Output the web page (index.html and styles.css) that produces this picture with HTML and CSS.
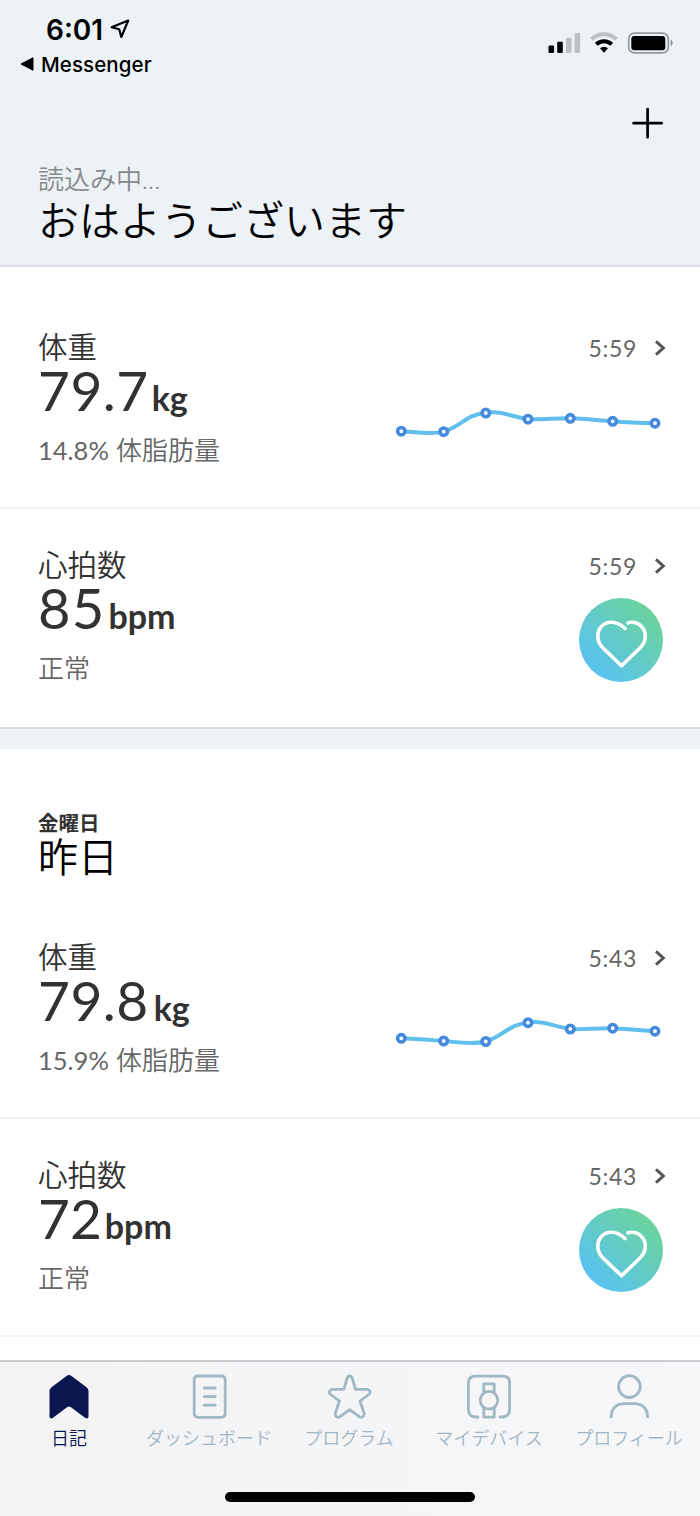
FILE: index.html
```html
<!DOCTYPE html>
<html lang="ja">
<head>
<meta charset="utf-8">
<title>日記</title>
<link rel="stylesheet" href="styles.css">
</head>
<body>
<div class="app">
  <header class="header">
    <div class="status">
      <div class="status-left">
        <div class="clock"><span class="clock-time">6:01</span>
          <svg class="location" width="20" height="20" viewBox="0 0 20 20"><path d="M18.2 1.6 L1.6 8.2 L9.2 10.3 L11.3 18 Z" fill="none" stroke="#000" stroke-width="2.2" stroke-linejoin="round"/></svg>
        </div>
        <div class="back">
          <svg width="14" height="14" viewBox="0 0 14 14"><path d="M1 7 L13 .8 V13.2 Z" stroke="#000" stroke-linejoin="round"/></svg>
          <span>Messenger</span>
        </div>
      </div>
      <svg class="status-icons" width="126" height="24" viewBox="548 31 126 24">
        <rect x="548.5" y="45.5" width="5.6" height="7.5" rx="1.3"/>
        <rect x="557.2" y="41.7" width="5.6" height="11.3" rx="1.3"/>
        <g fill="#bcc0c4"><rect x="566" y="37.8" width="5.6" height="15.2" rx="1.3"/><rect x="574.6" y="33" width="5.6" height="20" rx="1.3"/></g>
        <path d="M591.5 39.4 A17.5 17.5 0 0 1 616.5 39.4" fill="none" stroke="#bcc0c4" stroke-width="4"/>
        <path d="M596.3 44.4 A11 11 0 0 1 611.7 44.4" fill="none" stroke="#000" stroke-width="4"/>
        <path d="M600 48.3 A5.7 5.7 0 0 1 608 48.3 L604 52.8 Z"/>
        <rect x="628.7" y="33.2" width="39.6" height="19.6" rx="5.6" fill="none" stroke="#96999c" stroke-width="1.7"/>
        <rect x="631.3" y="36" width="34" height="14.3" rx="3"/>
        <path d="M670.7 39.6 Q672.7 40.8 672.7 43 Q672.7 45.2 670.7 46.4Z" fill="#8e9194"/>
      </svg>
    </div>
    <div class="toolbar">
      <svg width="32" height="32" viewBox="0 0 32 32"><path d="M15.6 2.2 V30.2 M1.6 16.2 H29.6" stroke="#000" stroke-width="2.7" stroke-linecap="round"/></svg>
    </div>
    <div class="loading">読込み中...</div>
    <h1 class="greeting">おはようございます</h1>
  </header>

  <main class="feed">
    <section class="day day-today">
      <article class="metric">
        <div class="metric-text">
          <h3 class="metric-name">体重</h3>
          <div class="metric-value">79.7<span class="unit">kg</span></div>
          <div class="metric-note"><span class="percent">14.8%</span> 体脂肪量</div>
        </div>
        <div class="metric-side">
          <div class="metric-time">5:59 <svg width="12" height="18" viewBox="0 0 12 18"><path d="M2 2.3 L9.3 9 L2 15.7" fill="none" stroke="#555" stroke-width="3"/></svg></div>
          <svg class="trend" width="274" height="80" viewBox="0 0 274 80">
            <path class="trend-line" d="M11.3 51.2 C25 52 42 55 53.7 51.7 C70 47 77 34 95.8 33 C112 30 121 37 138 39.2 C151 40 166 38 180.3 38.3 C194 38.5 209 40.5 222.7 41.3 C237 42.5 251 43 265 43.2"/>
            <g class="trend-dots"><circle cx="11.3" cy="51.2" r="3.7"/><circle cx="53.7" cy="51.7" r="3.7"/><circle cx="95.8" cy="33" r="3.7"/><circle cx="138" cy="39.2" r="3.7"/><circle cx="180.3" cy="38.3" r="3.7"/><circle cx="222.7" cy="41.3" r="3.7"/><circle cx="265" cy="43.2" r="3.7"/></g>
          </svg>
        </div>
      </article>
      <article class="metric metric-last">
        <div class="metric-text">
          <h3 class="metric-name">心拍数</h3>
          <div class="metric-value value-wide">85<span class="unit">bpm</span></div>
          <div class="metric-note">正常</div>
        </div>
        <div class="metric-side">
          <div class="metric-time">5:59 <svg width="12" height="18" viewBox="0 0 12 18"><path d="M2 2.3 L9.3 9 L2 15.7" fill="none" stroke="#555" stroke-width="3"/></svg></div>
          <div class="heart"><svg width="84" height="84" viewBox="0 0 84 84"><path d="M46 30.5 C41 25.5 36.5 24.3 32 24.3 C24 24.3 18.8 30.8 18.8 38 C18.8 43 21 47 24 50 L42.5 67.7 L61 50 C64.5 46.5 66.3 42.5 66.3 38 C66.3 30.5 60.5 24.5 53 24.3 Q50.5 24.2 49 24.8" fill="none" stroke="#fff" stroke-width="3.6" stroke-linecap="round" stroke-linejoin="round"/></svg></div>
        </div>
      </article>
    </section>

    <section class="day">
      <div class="day-head">
        <div class="weekday">金曜日</div>
        <h2 class="day-name">昨日</h2>
      </div>
      <article class="metric">
        <div class="metric-text">
          <h3 class="metric-name">体重</h3>
          <div class="metric-value">79.8<span class="unit unit-after-round">kg</span></div>
          <div class="metric-note"><span class="percent">15.9%</span> 体脂肪量</div>
        </div>
        <div class="metric-side">
          <div class="metric-time">5:43 <svg width="12" height="18" viewBox="0 0 12 18"><path d="M2 2.3 L9.3 9 L2 15.7" fill="none" stroke="#555" stroke-width="3"/></svg></div>
          <svg class="trend" width="274" height="80" viewBox="0 1 274 80">
            <path class="trend-line" d="M11.3 49.3 C25 49.7 40 51 53.7 52 C67 53 82 56 95.8 52.5 C113 47.5 119 35 138 33.7 C154 31 164 38 180.3 40 C193 40.7 208 38.8 222.7 39.2 C237 40.3 251 41.5 265 42.2"/>
            <g class="trend-dots"><circle cx="11.3" cy="49.3" r="3.7"/><circle cx="53.7" cy="52" r="3.7"/><circle cx="95.8" cy="52.5" r="3.7"/><circle cx="138" cy="33.7" r="3.7"/><circle cx="180.3" cy="40" r="3.7"/><circle cx="222.7" cy="39.2" r="3.7"/><circle cx="265" cy="42.2" r="3.7"/></g>
          </svg>
        </div>
      </article>
      <article class="metric">
        <div class="metric-text">
          <h3 class="metric-name">心拍数</h3>
          <div class="metric-value value-tight">72<span class="unit">bpm</span></div>
          <div class="metric-note">正常</div>
        </div>
        <div class="metric-side">
          <div class="metric-time">5:43 <svg width="12" height="18" viewBox="0 0 12 18"><path d="M2 2.3 L9.3 9 L2 15.7" fill="none" stroke="#555" stroke-width="3"/></svg></div>
          <div class="heart"><svg width="84" height="84" viewBox="0 0 84 84"><path d="M46 30.5 C41 25.5 36.5 24.3 32 24.3 C24 24.3 18.8 30.8 18.8 38 C18.8 43 21 47 24 50 L42.5 67.7 L61 50 C64.5 46.5 66.3 42.5 66.3 38 C66.3 30.5 60.5 24.5 53 24.3 Q50.5 24.2 49 24.8" fill="none" stroke="#fff" stroke-width="3.6" stroke-linecap="round" stroke-linejoin="round"/></svg></div>
        </div>
      </article>
    </section>
  </main>

  <nav class="tabs">
    <div class="tabs-row">
      <a class="tab tab-active">
        <svg width="46" height="46" viewBox="0 0 46 46"><path d="M20.5 2 Q23 .2 25.5 2 L40.5 13.2 Q42.5 14.8 42.5 17 V42.5 Q42 45.5 39 43.7 L25 33.2 Q23 31.8 21 33.2 L7 43.7 Q4 45.5 3.5 42.5 V17 Q3.5 14.8 5.5 13.2 Z" fill="#0b1650"/></svg>
        <span>日記</span>
      </a>
      <a class="tab">
        <svg class="line-icon" width="46" height="46" viewBox="0 0 46 46"><rect x="8.2" y="2" width="31" height="41.3" rx="3.5"/><path d="M18.2 14 H29.2 M18.2 22.6 H29.2 M18.2 31.2 H29.2" stroke-linecap="round"/></svg>
        <span>ダッシュボード</span>
      </a>
      <a class="tab">
        <svg class="line-icon" width="46" height="46" viewBox="0 0 46 46"><path d="M21.2 3.8 Q23.7 .2 26.2 3.8 L29.5 15.4 H41.7 Q45.6 17.2 43.3 20 L34 27 L38.2 39.5 Q38 44.2 33.6 42.9 L23.7 35.7 L13.8 42.9 Q9.4 44.2 9.2 39.5 L13.4 27 L4.1 20 Q1.8 17.2 5.7 15.4 H17.9 Z"/></svg>
        <span>プログラム</span>
      </a>
      <a class="tab">
        <svg class="line-icon" width="46" height="46" viewBox="0 0 46 46"><path d="M12 43 H9.2 Q2.4 42 2.4 35.5 V9 Q2.4 2.1 9.3 2.1 H36.7 Q43.6 2.1 43.6 9 V35.5 Q43.6 42 36.8 43 H34" stroke-linecap="round"/><circle cx="23" cy="26.2" r="8.8"/><path d="M17.8 18.5 V9.8 H28.2 V18.5 M17.8 34 V43.2 H28.2 V34"/></svg>
        <span>マイデバイス</span>
      </a>
      <a class="tab">
        <svg class="line-icon" width="46" height="46" viewBox="0 0 46 46"><circle cx="23.4" cy="12.6" r="10.9"/><path d="M5.1 44 Q5.1 29.7 19.4 29.7 H27.4 Q41.7 29.7 41.7 44"/></svg>
        <span>プロフィール</span>
      </a>
    </div>
    <div class="home-bar"></div>
  </nav>
</div>
</body>
</html>
```
FILE: styles.css
```css
* { box-sizing: border-box; }
body { margin: 0; background: #fff; }
svg { display: block; }
h1, h2, h3 { margin: 0; font-weight: 350; }

.app {
  width: 700px;
  height: 1516px;
  display: flex;
  flex-direction: column;
  overflow: hidden;
  font-family: Lato, "Noto Sans CJK JP", sans-serif;
  font-weight: 350;
  color: #323232;
}

.header {
  height: 267px;
  flex: none;
  background: #edf2f7;
  border-bottom: 2px solid #dcdde9;
  color: #000;
}
.status {
  height: 90px;
  display: flex;
  justify-content: space-between;
  padding: 14px 26px 0 20px;
  font-family: Inter, sans-serif;
}
.status-icons { margin-top: 17px; }
.clock { display: flex; align-items: center; gap: 7px; height: 32px; padding-left: 26px; }
.clock-time { font-size: 28px; font-weight: 600; line-height: 32px; }
.location { margin-top: -2px; }
.back { display: flex; align-items: center; gap: 7px; height: 36px; font-size: 20.5px; font-weight: 500; letter-spacing: 0.1px; }
.toolbar { height: 72px; display: flex; justify-content: flex-end; padding: 17px 36px 0 0; }
.loading { padding-left: 38px; font-size: 26px; line-height: 34px; color: #88898b; }
.greeting { padding: 1px 0 0 38px; font-size: 41px; line-height: 48px; }

.feed { flex: 1; min-height: 0; overflow: hidden; }
.day-today { padding-top: 24px; border-bottom: 20px solid #edf2f7; }

.metric {
  height: 218px;
  display: flex;
  justify-content: space-between;
  padding: 0 36px 0 38px;
  border-bottom: 2px solid #f2f2f4;
}
.metric-last { height: 220px; border-bottom-color: #d9dce8; }
.metric-text { padding-top: 40px; }
.metric-name { font-size: 29.5px; line-height: 32px; }
.metric-value { font-family: Lato, sans-serif; font-size: 55px; line-height: 54px; height: 54px; font-weight: 400; letter-spacing: 0.5px; white-space: nowrap; }
.value-wide { font-size: 56px; letter-spacing: 1.2px; }
.value-tight { letter-spacing: 0; }
.unit { font-size: 34px; font-weight: 700; margin-left: 3px; letter-spacing: 0; }
.unit-after-round { margin-left: 5px; }
.metric-note { margin-top: 17px; font-size: 26px; line-height: 32px; color: #666; white-space: nowrap; }
.percent { font-size: 25.5px; font-weight: 400; }
.metric-side { padding-top: 45px; display: flex; flex-direction: column; align-items: flex-end; gap: 20px; }
.metric-time { display: flex; align-items: center; gap: 17px; height: 24px; margin-right: -2px; font-size: 23px; font-weight: 400; letter-spacing: 0.7px; color: #666; }

.trend-line { fill: none; stroke: #60bfec; stroke-width: 4; }
.trend-dots circle { fill: #fff; stroke: #468ade; stroke-width: 3.6; }

.heart {
  width: 84px;
  height: 84px;
  margin-right: 1.5px;
  border-radius: 50%;
  background: linear-gradient(45deg, #59c2f2 15%, #62cbc5 50%, #6bd39d 85%);
}

.day-head { height: 152px; padding: 62px 38px 0; }
.weekday { font-size: 20.5px; line-height: 24px; font-weight: 700; }
.day-name { font-size: 40px; line-height: 44px; color: #000; }

.tabs {
  height: 156px;
  flex: none;
  background: linear-gradient(90deg, #f3f3f4, #f6f7f9);
  border-top: 2px solid #c9cbd1;
}
.tabs-row { display: grid; grid-template-columns: repeat(5, 140px); margin-left: -1px; padding-top: 12px; }
.tab { display: flex; flex-direction: column; align-items: center; gap: 5px; font-size: 18px; line-height: 26px; color: #a2b7c6; white-space: nowrap; }
.tab-active { color: #0b1650; }
.line-icon { fill: none; stroke: #a0b7c4; stroke-width: 2.8; stroke-linejoin: round; }
.home-bar { width: 250px; height: 10px; margin: 41px auto 0; border-radius: 5px; background: #000; }
```
